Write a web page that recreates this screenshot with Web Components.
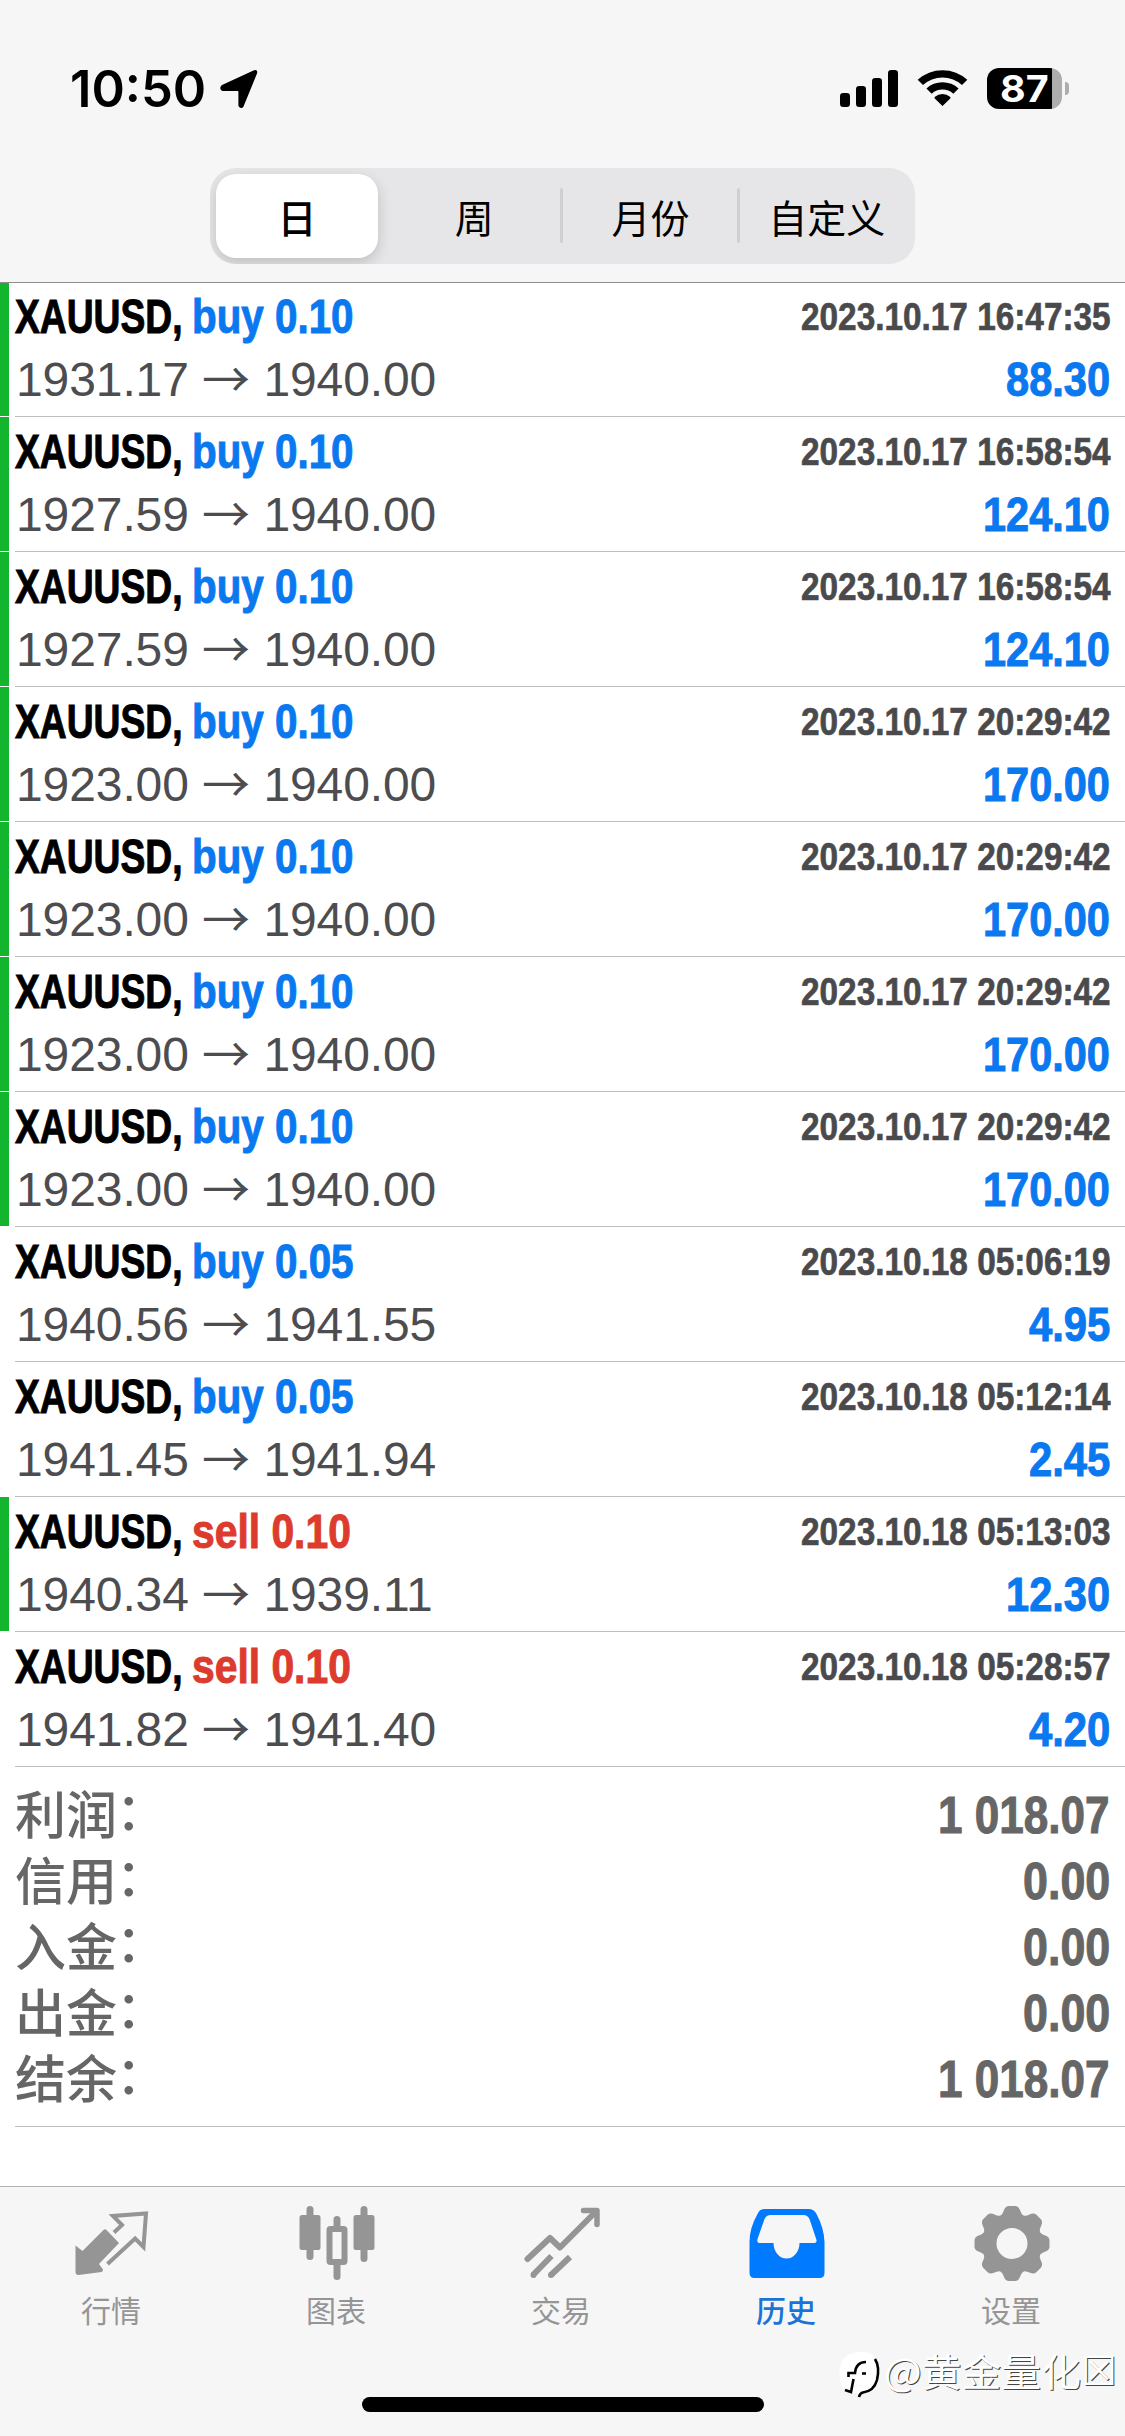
<!DOCTYPE html>
<html lang="zh-CN">
<head>
<meta charset="utf-8">
<title>历史</title>
<style>
html,body{margin:0;padding:0}
body{width:1125px;height:2436px;overflow:hidden;background:#fff;font-family:"Liberation Sans","Noto Sans CJK SC",sans-serif}
</style>
</head>
<body>
<trade-app></trade-app>
<script>
const define=(name,html,setup)=>customElements.define(name,class extends HTMLElement{
  connectedCallback(){
    if(this.shadowRoot)return;
    const root=this.attachShadow({mode:'open'});
    const t=document.createElement('template');
    t.innerHTML=typeof html==='function'?html(this):html;
    root.append(t.content.cloneNode(true));
    if(setup)setup(this,root);
  }
});

/* Text condensed or widened to an exact width. */
define('fit-text',el=>`<style>
:host{display:inline-block;white-space:pre;width:${el.getAttribute('w')}px;flex:none}
span{display:inline-block;transform-origin:0 50%;white-space:pre}
</style><span><slot></slot></span>`,(el,root)=>{
  const s=root.querySelector('span');
  s.style.transform=`scaleX(${+el.getAttribute('w')/s.offsetWidth})`;
});

define('status-bar',`<style>
:host{display:flex;justify-content:space-between;height:168px;padding:0 56px 0 70px;box-sizing:border-box;align-items:flex-start}
.left,.right{display:flex;align-items:flex-start}
.time{font:600 51px/66px Inter,sans-serif;margin-top:56px}
svg{display:block}
.loc{margin:69px 0 0 13px}
.right{margin-top:68px}
.sig{margin-top:2px}
.wifi{margin:2px 0 0 18px}
.bat{margin-left:19px;display:flex;align-items:center}
.cell{width:75px;height:41px;border-radius:12px;box-sizing:border-box;padding-right:1px;display:flex;align-items:center;justify-content:center;color:#fff;font:700 37px/41px Inter,sans-serif;background:linear-gradient(90deg,#000 65px,#adadad 65px)}
.nub{width:4px;height:13px;margin-left:3px;background:#adadad;border-radius:0 6px 6px 0}
</style>
<div class="left"><fit-text class="time" w="136">10:50</fit-text>
<svg class="loc" width="40" height="41" viewBox="0 0 40 41"><path d="M3.500 17 35 2.600Q37.800 1.500 36.800 4.300L23.500 36.800Q22.200 39 20.600 36.500V23Q20.600 20.900 18.600 20.900H4Q1.200 19.500 3.500 17Z" stroke="#000" stroke-width="2.400" stroke-linejoin="round"/></svg></div>
<div class="right">
<svg class="sig" width="59" height="38" viewBox="0 0 59 38"><rect x="0" y="23" width="10" height="14" rx="3.300"/><rect x="16" y="16" width="10" height="21" rx="3.300"/><rect x="32" y="8" width="10" height="29" rx="3.300"/><rect x="48" y="0" width="10" height="37" rx="3.300"/></svg>
<svg class="wifi" width="51" height="37" viewBox="0 1 51 39" preserveAspectRatio="none"><path d="M.7 11.400A35.500 35.500 0 0 1 50.300 11.400L45 16.900A27.800 27.800 0 0 0 6 16.900ZM9.400 20.400A23 23 0 0 1 41.600 20.400L36.300 26A15.500 15.500 0 0 0 14.700 26ZM18 29.300A11 11 0 0 1 33 29.300Q34 30.400 33 31.400L25.500 39 18 31.400Q17 30.400 18 29.300Z"/></svg>
<div class="bat"><div class="cell"><fit-text w="49">87</fit-text></div><div class="nub"></div></div>
</div>`);

define('period-tabs',`<style>
:host{display:flex;width:705px;height:96px;margin:0 0 0 210px;border-radius:26px;background:#e6e6e9;overflow:hidden}
.i{flex:1;display:flex;align-items:center;justify-content:center;font:400 39px/56px "Noto Sans CJK SC",sans-serif;color:#000;padding-bottom:1px}
.sel{flex:0 0 162px;height:83px;margin:6px 8px 0 6px;background:#fff;border-radius:20px;font-weight:500;box-shadow:0 5px 14px rgba(0,0,0,.17)}
.sep{width:3px;height:55px;margin:20px -1px 0 -2px;border-radius:2px;background:#d0d0d3}
</style><div class="i sel">日</div><div class="i">周</div><div class="sep"></div><div class="i">月份</div><div class="sep"></div><div class="i">自定义</div>`);

define('trade-row',el=>{
  const [type,vol,from,to,date,profit,pw,mark]=el.dataset.v.split('|');
  const c=type==='buy'?'#0a78ef':'#dc3b2d';
  return `<style>
:host{display:flex;height:135px}
.mark{width:9px;height:134px;margin-right:6px;background:${mark==='1'?'#13b52f':'transparent'}}
.body{flex:1;box-sizing:border-box;border-bottom:1px solid #bdbdc0;padding:7px 15px 0 0;display:flex;flex-direction:column}
.line{display:flex;justify-content:space-between;height:63px}
.n{font:700 48px/56px "Liberation Sans Narrow","Liberation Sans",sans-serif;-webkit-text-stroke:1px currentColor}
.t{color:${c};margin-left:9.500px}
.d{font:700 39px/50px "Liberation Sans Narrow","Liberation Sans",sans-serif;color:#4a4a4d;margin-top:2.500px;-webkit-text-stroke:.7px currentColor}
.p{font:400 48px/56px "Liberation Sans",sans-serif;color:#4d4d50;white-space:pre;margin-left:1px;letter-spacing:-.1px}
.a{display:inline-block;width:48px;margin:0 13.300px;font:400 48px/56px "Noto Sans CJK SC",sans-serif;transform:translateY(-4px)}
.r{color:#0a78ef}
.pair{display:flex}
</style><div class="mark"></div><div class="body">
<div class="line"><div class="pair"><fit-text class="n" w="167.500">XAUUSD,</fit-text><fit-text class="n t" w="${type==='buy'?161.5:159}">${type} ${vol}</fit-text></div><fit-text class="d" w="309.500">${date}</fit-text></div>
<div class="line"><div class="pair p"><span>${from}</span><span class="a">→</span><span>${to}</span></div><fit-text class="n r" w="${pw}">${profit}</fit-text></div>
</div>`;
});

define('total-row',el=>`<style>
:host{display:flex;justify-content:space-between;height:66px;color:#666}
.l{font:500 51px/66px "Liberation Sans","Noto Sans CJK SC",sans-serif;margin-top:3px;display:flex}
.c{transform:translate(-1px,-4px)}
.v{font:700 51px/66px "Liberation Sans Narrow","Liberation Sans",sans-serif;margin-top:2px;-webkit-text-stroke:1px currentColor}
</style><span class="l"><slot></slot><span class="c">：</span></span><fit-text class="v" w="${el.getAttribute('w')}">${el.getAttribute('value')}</fit-text>`);

define('totals-block',`<style>
:host{display:block;height:360px;box-sizing:border-box;margin-left:15px;padding:14px 15px 0 0;border-bottom:1px solid #bdbdc0}
</style>
<total-row value="1 018.07" w="172">利润</total-row>
<total-row value="0.00" w="87">信用</total-row>
<total-row value="0.00" w="87">入金</total-row>
<total-row value="0.00" w="87">出金</total-row>
<total-row value="1 018.07" w="172">结余</total-row>`);

define('tab-item',el=>`<style>
:host{display:flex;flex-direction:column;align-items:center;width:225px;color:${el.hasAttribute('on')?'#007aff':'#959595'}}
.t{font:400 30px/40px "Noto Sans CJK SC",sans-serif;margin:2px 3px 0 0;${el.hasAttribute('on')?'font-weight:500;color:#1a73d9':''}}
.i{height:100px}
::slotted(svg){display:block}
</style><div class="i"><slot></slot></div><div class="t">${el.getAttribute('label')}</div>`);

define('tab-bar',`<style>
:host{display:flex;height:250px;box-sizing:border-box;border-top:1px solid #b2b2b2;background:#f6f6f6;width:1125px}
</style>
<tab-item label="行情"><svg width="80" height="100" viewBox="72.500 2187 80 100" fill="#959595"><path d="M105.500 2229.500 118.500 2243 98.500 2264 102.500 2269.500Q102.500 2271.500 101 2272L78 2275Q75 2275 75 2272V2245.500L82 2251 103 2230Q104.300 2229 105.500 2229.500Z"/><path d="M107 2264 134.600 2238.500 143 2247 145.500 2213.500 112.500 2216 121.500 2225 113.500 2232.500" fill="none" stroke="#959595" stroke-width="4"/></svg></tab-item>
<tab-item label="图表"><svg width="80" height="100" viewBox="297.500 2187 80 100" fill="#959595" stroke="#959595"><path d="M309.500 2209.500V2256.500M363.500 2209.500V2258.500M336.500 2219.500V2226M336.500 2264V2276.500" stroke-width="7" stroke-linecap="round"/><rect x="299" y="2215" width="21" height="35" rx="2.500" stroke="none"/><rect x="353" y="2215" width="21" height="35" rx="2.500" stroke="none"/><rect x="329" y="2229" width="15" height="33" rx="1" fill="none" stroke-width="6"/></svg></tab-item>
<tab-item label="交易"><svg width="80" height="100" viewBox="522.500 2187 80 100" fill="none" stroke="#959595"><path d="M527 2259 549.500 2238 559.500 2247.500 595 2212" stroke-width="6" stroke-linecap="round" stroke-linejoin="round"/><path d="M583 2210.500H596.500V2224.500" stroke-width="5.500" stroke-linecap="round" stroke-linejoin="round"/><path d="M551 2256 532.500 2275M569.500 2257 550.500 2275" stroke-width="6"/><circle cx="533" cy="2275" r="3" fill="#959595" stroke="none"/><circle cx="550.500" cy="2275" r="3" fill="#959595" stroke="none"/></svg></tab-item>
<tab-item label="历史" on><svg width="80" height="100" viewBox="747.500 2187 80 100"><path d="M764 2209H808Q813.500 2209 816 2214 823.500 2228 824 2242V2273Q824 2278 819 2278H754Q749 2278 749 2273V2242Q749 2228 757 2214 759 2209 764 2209Z" fill="#007aff"/><path d="M770 2215H803Q807 2215 809 2219L816 2240Q816.500 2243 813 2243H799A13 15.500 0 0 1 773 2243H759Q756 2243 757 2239L764 2219Q766 2215 770 2215Z" fill="#f6f6f6"/></svg></tab-item>
<tab-item label="设置"><svg width="80" height="100" viewBox="972.500 2187 80 100" fill="#959595"><g id="g" transform="translate(1011.500 2243.500)"><circle r="22.500" fill="none" stroke="#959595" stroke-width="14"/></g></svg></tab-item>`,(el,root)=>{
  const g=root.querySelector('#g');
  for(let a=0;a<360;a+=45){
    const p=document.createElementNS('http://www.w3.org/2000/svg','path');
    p.setAttribute('d','M-13 -27Q-9.500 -28.500 -8 -33.500Q-6.500 -37.500 -3 -37.500H3Q6.500 -37.500 8 -33.500Q9.500 -28.500 13 -27L8 -20H-8Z');
    p.setAttribute('transform',`rotate(${a})`);
    g.append(p);
  }
});

define('home-bar',`<style>:host{position:absolute;left:362px;top:2397px;width:402px;height:15px;border-radius:8px;background:#000}</style>`);

define('water-mark',`<style>
:host{position:absolute;left:838px;top:2344px;display:flex;height:56px;color:#fff}
.t{font:400 38px/56px "Noto Sans CJK SC","DejaVu Sans",sans-serif;text-shadow:1px 1px 0 #444;white-space:nowrap;margin-top:-2px}
.box{font:400 40px/56px "DejaVu Sans",sans-serif;text-shadow:1px 1px 0 #444;margin-top:-1px}
svg{display:block}
</style><svg width="46" height="56" viewBox="838 2344 46 56"><path d="M859 2352Q869 2351 875 2357 880 2363 879 2373 878 2386 871 2390 866 2393 862 2393L859 2398 857 2393Q848 2394 843 2388 838 2380 840 2368 842 2353 859 2352Z" fill="#fff"/><path d="M848.500 2377V2373H855Q856 2362 866 2362M853.500 2379 851 2392 845 2390M862 2373.500H866M875 2359Q880 2367 877 2380 874 2391 863 2392.500 860 2393 859 2397" fill="none" stroke="#000" stroke-width="2.600"/></svg><fit-text class="t" w="197">@黄金量化</fit-text><fit-text class="box" w="36">☒</fit-text>`);

define('trade-app',()=>{
  const rows=[
  'buy|0.10|1931.17|1940.00|2023.10.17 16:47:35|88.30|104|1',
  'buy|0.10|1927.59|1940.00|2023.10.17 16:58:54|124.10|127|1',
  'buy|0.10|1927.59|1940.00|2023.10.17 16:58:54|124.10|127|1',
  'buy|0.10|1923.00|1940.00|2023.10.17 20:29:42|170.00|127|1',
  'buy|0.10|1923.00|1940.00|2023.10.17 20:29:42|170.00|127|1',
  'buy|0.10|1923.00|1940.00|2023.10.17 20:29:42|170.00|127|1',
  'buy|0.10|1923.00|1940.00|2023.10.17 20:29:42|170.00|127|1',
  'buy|0.05|1940.56|1941.55|2023.10.18 05:06:19|4.95|81|0',
  'buy|0.05|1941.45|1941.94|2023.10.18 05:12:14|2.45|81|0',
  'sell|0.10|1940.34|1939.11|2023.10.18 05:13:03|12.30|104|1',
  'sell|0.10|1941.82|1941.40|2023.10.18 05:28:57|4.20|81|0'];
  return `<style>
:host{display:flex;flex-direction:column;position:relative;width:1125px;height:2436px;background:#fff}
header{height:282px;background:#f6f6f6;box-shadow:0 1px 0 #8c8c8c;flex:none;position:relative;display:flex;flex-direction:column}
.sp{flex:1}
period-tabs,status-bar{flex:none}
</style><header><status-bar></status-bar><period-tabs></period-tabs></header>
<main>${rows.map(r=>`<trade-row data-v="${r}"></trade-row>`).join('')}<totals-block></totals-block></main>
<div class="sp"></div><tab-bar></tab-bar><home-bar></home-bar><water-mark></water-mark>`;
});
</script>
</body>
</html>
